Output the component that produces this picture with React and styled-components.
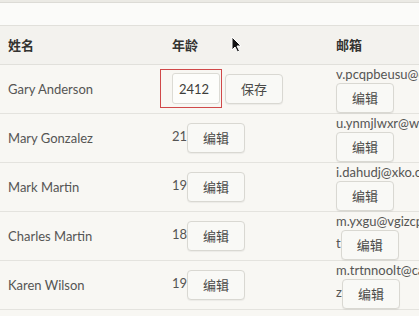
import React from 'react';
import styled, { createGlobalStyle } from 'styled-components';

const GlobalStyle = createGlobalStyle`
  html, body {
    margin: 0;
    padding: 0;
    background: #f8f7f3;
    overflow: hidden;
  }
  body {
    font-family: Lato, "Noto Sans CJK SC", sans-serif;
    font-size: 13px;
    color: #555553;
  }
`;

const PEOPLE = [
  { name: 'Gary Anderson', age: 2412, email: 'v.pcqpbeusu@qsl.com', editing: true },
  { name: 'Mary Gonzalez', age: 21, email: 'u.ynmjlwxr@wtg.com' },
  { name: 'Mark Martin', age: 19, email: 'i.dahudj@xko.com' },
  { name: 'Charles Martin', age: 18, email: 'm.yxgu@vgizcpqwxkzhmw.net' },
  { name: 'Karen Wilson', age: 19, email: 'm.trtnnoolt@cahkzmqwepx.biz' },
];

const Page = styled.div`
  position: relative;
  width: 419px;
  height: 316px;
  overflow: hidden;
`;

const TopEdge = styled.div`
  height: 2px;
  background: #ebeae5;
  border-bottom: 1px solid #dcdbd6;
`;

const TopStrip = styled.div`
  height: 22px;
  background: #fbfbf9;
  border-bottom: 1px solid #e1e0db;
`;

const Table = styled.table`
  border-collapse: collapse;
  table-layout: fixed;
  width: 498px;
`;

const HeadRow = styled.tr`
  height: 38px;
  background: #f3f2ee;
  border-bottom: 1px solid #e1e0db;
`;

const Th = styled.th`
  text-align: left;
  padding: 0 8px;
  font-weight: 700;
  color: #333331;
  font-size: 13px;
`;

const Row = styled.tr`
  height: 49px;
  border-bottom: 1px solid #e4e3de;
`;

const Td = styled.td`
  padding: 0 8px;
  vertical-align: middle;
  ${props => props.$wrap && 'word-break: break-all; line-height: 18px;'}
`;

// the address stays whole; only its last letter may drop to the next line
const Address = styled.span`
  white-space: nowrap;
`;

const Button = styled.button`
  display: inline-block;
  vertical-align: middle;
  width: 58px;
  height: 30px;
  margin: 0 0 0 ${props => props.$gap || 0}px;
  padding: 0;
  font-family: Lato, "Noto Sans CJK SC", sans-serif;
  font-size: 13px;
  color: #4a4a48;
  background: #f9f9f6;
  border: 1px solid #d9d8d2;
  border-radius: 4px;
  box-shadow: 0 1px 1px rgba(0, 0, 0, 0.05);
`;

const Highlight = styled.span`
  position: relative;
  display: inline-block;
  vertical-align: middle;

  &::after {
    content: '';
    position: absolute;
    left: -12px;
    right: -2px;
    top: -4px;
    bottom: -4px;
    border: 1px solid #d0494a;
  }
`;

const AgeInput = styled.input`
  box-sizing: border-box;
  width: 48px;
  height: 31px;
  padding: 0 6px;
  font-family: Lato, sans-serif;
  font-size: 13px;
  color: #3d3d3b;
  background: #fdfdfb;
  border: 1px solid #dcdbd5;
  border-radius: 3px;
  outline: none;
`;

const Cursor = styled.svg`
  position: absolute;
  left: 231px;
  top: 36px;
`;

export default function App() {
  return (
    <Page>
      <GlobalStyle />
      <TopEdge />
      <TopStrip />
      <Table>
        <colgroup>
          <col style={{ width: 164 }} />
          <col style={{ width: 164 }} />
          <col style={{ width: 170 }} />
        </colgroup>
        <thead>
          <HeadRow>
            <Th>姓名</Th>
            <Th>年龄</Th>
            <Th>邮箱</Th>
          </HeadRow>
        </thead>
        <tbody>
          {PEOPLE.map(p => (
            <Row key={p.name}>
              <Td>{p.name}</Td>
              <Td>
                {p.editing ? (
                  <>
                    <Highlight>
                      <AgeInput defaultValue={p.age} />
                    </Highlight>
                    <Button $gap={5}>保存</Button>
                  </>
                ) : (
                  <>
                    {p.age}
                    <Button $gap={0}>编辑</Button>
                  </>
                )}
              </Td>
              <Td $wrap>
                <Address>{p.email.slice(0, -1)}</Address>
                {p.email.slice(-1)}
                <Button>编辑</Button>
              </Td>
            </Row>
          ))}
        </tbody>
      </Table>
      <Cursor width="12" height="17" viewBox="0 0 12 17">
        <path d="M1 1 L1 14 L4 11 L6.5 16 L8.5 15 L6 10 L10 10 Z" fill="#111" stroke="#fff" strokeWidth="1" />
      </Cursor>
    </Page>
  );
}
